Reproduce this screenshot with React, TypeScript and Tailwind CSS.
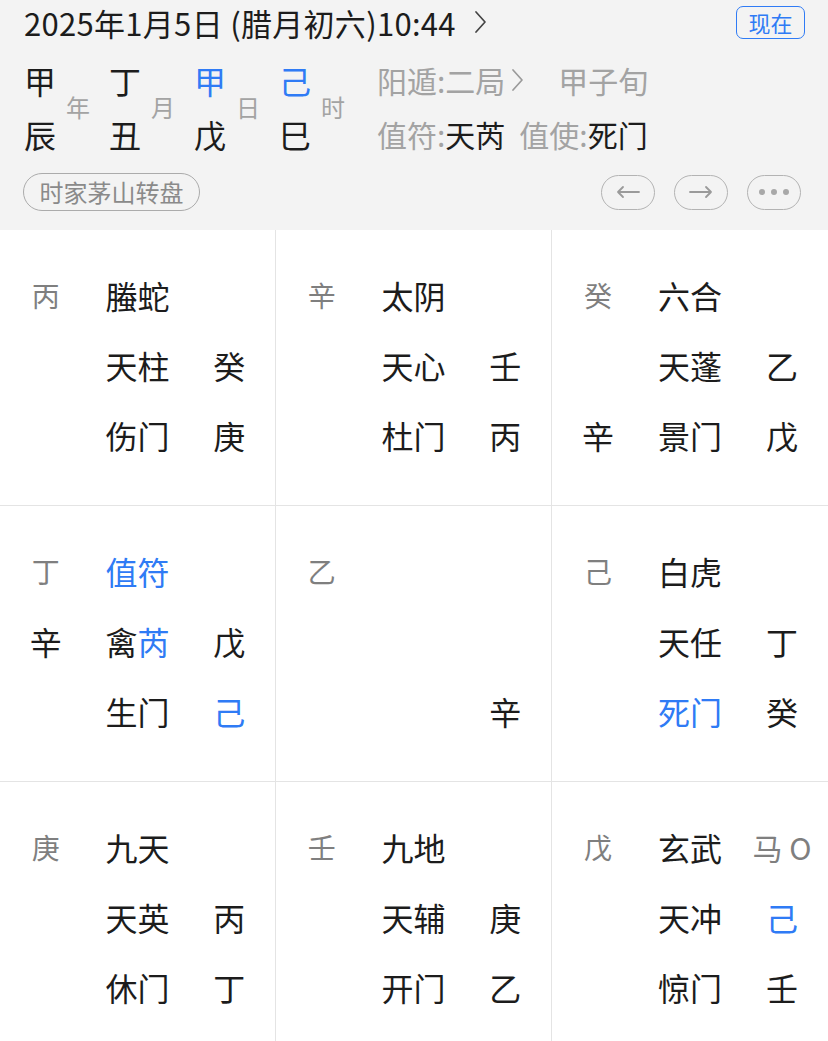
import React from "react";

type Seg = { t: string; blue?: boolean };
type CellItem = { segs: Seg[]; kind?: "stem" | "main" | "gray" };

function txt(s: string, blue = false): Seg[] {
  return [{ t: s, blue }];
}

type Cell = (CellItem | null)[][];

const cells: Cell[] = [
  [
    [{ segs: txt("丙"), kind: "stem" }, { segs: txt("螣蛇") }, null],
    [null, { segs: txt("天柱") }, { segs: txt("癸") }],
    [null, { segs: txt("伤门") }, { segs: txt("庚") }],
  ],
  [
    [{ segs: txt("辛"), kind: "stem" }, { segs: txt("太阴") }, null],
    [null, { segs: txt("天心") }, { segs: txt("壬") }],
    [null, { segs: txt("杜门") }, { segs: txt("丙") }],
  ],
  [
    [{ segs: txt("癸"), kind: "stem" }, { segs: txt("六合") }, null],
    [null, { segs: txt("天蓬") }, { segs: txt("乙") }],
    [{ segs: txt("辛") }, { segs: txt("景门") }, { segs: txt("戊") }],
  ],
  [
    [{ segs: txt("丁"), kind: "stem" }, { segs: txt("值符", true) }, null],
    [{ segs: txt("辛") }, { segs: [{ t: "禽" }, { t: "芮", blue: true }] }, { segs: txt("戊") }],
    [null, { segs: txt("生门") }, { segs: txt("己", true) }],
  ],
  [
    [{ segs: txt("乙"), kind: "stem" }, null, null],
    [null, null, null],
    [null, null, { segs: txt("辛") }],
  ],
  [
    [{ segs: txt("己"), kind: "stem" }, { segs: txt("白虎") }, null],
    [null, { segs: txt("天任") }, { segs: txt("丁") }],
    [null, { segs: txt("死门", true) }, { segs: txt("癸") }],
  ],
  [
    [{ segs: txt("庚"), kind: "stem" }, { segs: txt("九天") }, null],
    [null, { segs: txt("天英") }, { segs: txt("丙") }],
    [null, { segs: txt("休门") }, { segs: txt("丁") }],
  ],
  [
    [{ segs: txt("壬"), kind: "stem" }, { segs: txt("九地") }, null],
    [null, { segs: txt("天辅") }, { segs: txt("庚") }],
    [null, { segs: txt("开门") }, { segs: txt("乙") }],
  ],
  [
    [{ segs: txt("戊"), kind: "stem" }, { segs: txt("玄武") }, { segs: txt("马 O"), kind: "gray" }],
    [null, { segs: txt("天冲") }, { segs: txt("己", true) }],
    [null, { segs: txt("惊门") }, { segs: txt("壬") }],
  ],
];

function Item({ item }: { item: CellItem | null }) {
  if (!item) return <div />;
  const cls =
    item.kind === "stem"
      ? "text-[28px] text-[#7f7f7f]"
      : item.kind === "gray"
      ? "text-[30px] text-[#7f7f7f]"
      : "text-[32px] text-[#1c1c1c]";
  return (
    <div className={`flex items-center justify-center leading-none ${cls}`}>
      {item.segs.map((s, i) => (
        <span key={i} className={s.blue ? "text-[#2f7bf5]" : ""}>
          {s.t}
        </span>
      ))}
    </div>
  );
}

function Pillar({ top, bottom, label, blue }: { top: string; bottom: string; label: string; blue?: boolean }) {
  return (
    <div className="flex w-[85px] items-center">
      <div className="flex w-[32px] flex-col items-center gap-[22px] text-[32px] leading-none">
        <span className={blue ? "text-[#2f7bf5]" : "text-[#1c1c1c]"}>{top}</span>
        <span className="text-[#1c1c1c]">{bottom}</span>
      </div>
      <span className="ml-[10px] text-[24px] leading-none text-[#a3a3a3]">{label}</span>
    </div>
  );
}

function Chevron({ color = "#555", h = 24 }: { color?: string; h?: number }) {
  return (
    <svg width="14" height={h} viewBox="0 0 14 24" className="inline-block">
      <path d="M3 2 L12 12 L3 22" fill="none" stroke={color} strokeWidth="1.7" strokeLinecap="round" strokeLinejoin="round" />
    </svg>
  );
}

export default function App() {
  return (
    <div
      className="w-[828px] overflow-hidden bg-white"
      style={{ fontFamily: '"Noto Sans CJK SC", "Noto Sans", sans-serif' }}
    >
      <div className="h-[230px] bg-[#f3f3f3] px-[24px]">
        <div className="flex h-[44px] items-center justify-between">
          <div className="flex items-center text-[31px] leading-none tracking-[0.3px] text-[#1c1c1c]">
            <span>2025年1月5日 (腊月初六)10:44</span>
            <span className="ml-[17px] flex items-center">
              <Chevron color="#444" h={26} />
            </span>
          </div>
          <div className="mr-[-1px] flex h-[33px] w-[69px] items-center justify-center rounded-[7px] border-[1.5px] border-[#2f7bf5] text-[22px] leading-none text-[#2f7bf5]">
            现在
          </div>
        </div>
        <div className="mt-[20px] flex h-[86px] items-center">
          <Pillar top="甲" bottom="辰" label="年" />
          <Pillar top="丁" bottom="丑" label="月" />
          <Pillar top="甲" bottom="戊" label="日" blue />
          <Pillar top="己" bottom="巳" label="时" blue />
          <div className="ml-[13px] flex flex-col gap-[24px] text-[30px] leading-none">
            <div className="flex items-center text-[#a3a3a3]">
              <span>阳遁:二局</span>
              <span className="ml-[5px] flex items-center">
                <Chevron color="#9a9a9a" h={26} />
              </span>
              <span className="ml-[34px]">甲子旬</span>
            </div>
            <div className="flex items-center">
              <span className="text-[#a3a3a3]">值符:</span>
              <span className="text-[#1c1c1c]">天芮</span>
              <span className="ml-[14px] text-[#a3a3a3]">值使:</span>
              <span className="text-[#1c1c1c]">死门</span>
            </div>
          </div>
        </div>
        <div className="mt-[23px] flex items-center justify-between">
          <div className="ml-[-1px] flex h-[38px] w-[177px] items-center justify-center rounded-full border border-[#ababab] text-[24px] leading-none text-[#8a8a8a]">
            时家茅山转盘
          </div>
          <div className="mr-[3px] flex items-center gap-[19px]">
            <div className="flex h-[35px] w-[54px] items-center justify-center rounded-full border border-[#b3b3b3]">
              <svg width="26" height="14" viewBox="0 0 26 14">
                <path d="M24 7 H3 M8 2 L3 7 L8 12" fill="none" stroke="#9a9a9a" strokeWidth="1.8" strokeLinecap="round" strokeLinejoin="round" />
              </svg>
            </div>
            <div className="flex h-[35px] w-[54px] items-center justify-center rounded-full border border-[#b3b3b3]">
              <svg width="26" height="14" viewBox="0 0 26 14">
                <path d="M2 7 H23 M18 2 L23 7 L18 12" fill="none" stroke="#9a9a9a" strokeWidth="1.8" strokeLinecap="round" strokeLinejoin="round" />
              </svg>
            </div>
            <div className="flex h-[35px] w-[54px] items-center justify-center gap-[6px] rounded-full border border-[#b3b3b3]">
              <span className="h-[6px] w-[6px] rounded-full bg-[#a8a8a8]" />
              <span className="h-[6px] w-[6px] rounded-full bg-[#a8a8a8]" />
              <span className="h-[6px] w-[6px] rounded-full bg-[#a8a8a8]" />
            </div>
          </div>
        </div>
      </div>
      <div className="grid grid-cols-3">
        {cells.map((cell, ci) => (
          <div
            key={ci}
            className={`h-[276px] border-b border-[#e4e4e4] pt-[30px] ${ci % 3 !== 2 ? "border-r" : ""}`}
          >
            <div className="grid grid-cols-3 grid-rows-[70px_70px_70px]">
              {cell.flatMap((row, ri) =>
                row.map((it, ii) => <Item key={`${ri}-${ii}`} item={it} />)
              )}
            </div>
          </div>
        ))}
      </div>
    </div>
  );
}
